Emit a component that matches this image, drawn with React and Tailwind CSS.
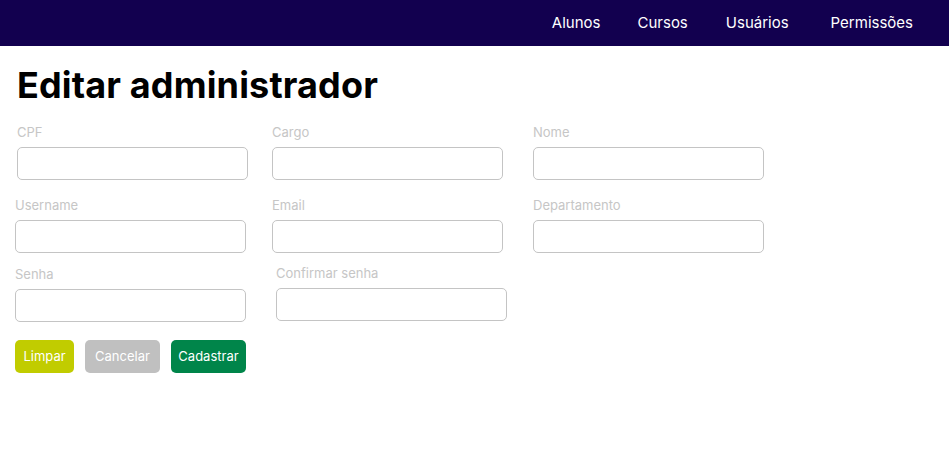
const NAV = ["Alunos", "Cursos", "Usuários", "Permissões"];

function Field({ label, className = "" }) {
  return (
    <div className={"flex flex-col w-[231px] " + className}>
      <label className="text-[13px] leading-4 text-[#c6c6c6]">{label}</label>
      <input className="mt-[7px] h-[33px] rounded-[5px] border border-[#c4c4c4] bg-white outline-none" />
    </div>
  );
}

export default function App() {
  return (
    <div className="min-h-screen bg-white font-['Inter',sans-serif] text-black">
      <header className="h-[46px] bg-[#12004f] flex items-center justify-end pr-[36px]">
        <nav className="flex text-white text-[15px]">
          <a>{NAV[0]}</a>
          <a className="ml-[37px]">{NAV[1]}</a>
          <a className="ml-[38px]">{NAV[2]}</a>
          <a className="ml-[42px]">{NAV[3]}</a>
        </nav>
      </header>

      <main className="px-[15px]">
        <h1 className="ml-[2px] mt-[19px] text-[36px] leading-10 font-bold tracking-[0.15px]">
          Editar administrador
        </h1>

        <div className="mt-[19px] flex">
          <Field label="CPF" className="ml-[2px]" />
          <Field label="Cargo" className="ml-[24px]" />
          <Field label="Nome" className="ml-[30px]" />
        </div>

        <div className="mt-[17px] flex">
          <Field label="Username" />
          <Field label="Email" className="ml-[26px]" />
          <Field label="Departamento" className="ml-[30px]" />
        </div>

        <div className="mt-[12px] flex items-end">
          <Field label="Senha" />
          <Field label="Confirmar senha" className="ml-[30px] mb-[1px]" />
        </div>

        <div className="mt-[18px] flex gap-[11px] text-[13px] text-white">
          <button className="h-[33px] w-[59px] rounded-[5px] bg-[#c1cc00]">Limpar</button>
          <button className="h-[33px] w-[75px] rounded-[5px] bg-[#c0c0c0]">Cancelar</button>
          <button className="h-[33px] w-[75px] rounded-[5px] bg-[#00854a]">Cadastrar</button>
        </div>
      </main>
    </div>
  );
}
